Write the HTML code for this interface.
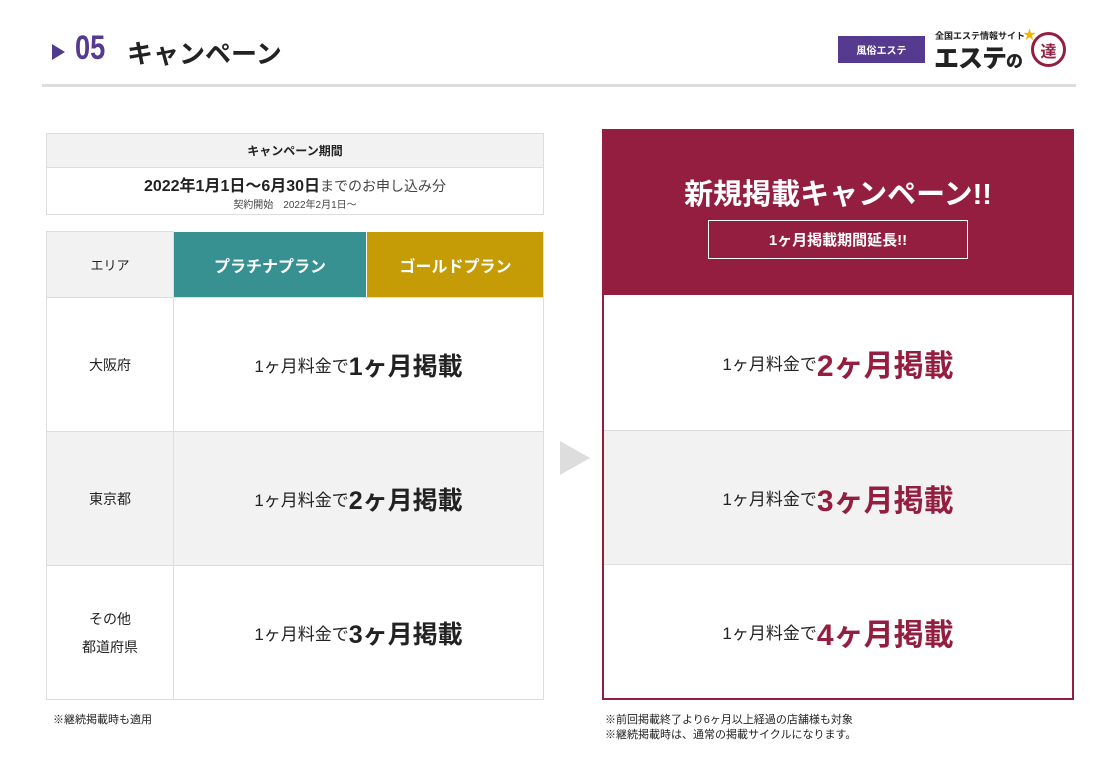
<!DOCTYPE html>
<html><head><meta charset="utf-8"><style>
*{margin:0;padding:0;box-sizing:border-box}
body{width:1117px;height:784px;background:#fff;font-family:"Liberation Sans","Noto Sans CJK JP",sans-serif;color:#222;position:relative;overflow:hidden}
.a{position:absolute}
.c{display:flex;align-items:center;justify-content:center;text-align:center}
.cell{position:absolute;border:1px solid #ddd}
.big{font-size:25px;font-weight:bold}
.big.red{font-size:30px}
.sm{font-size:17px}
.red{color:#931e40}
</style></head><body>
<div class="a" style="left:52px;top:44px;width:0;height:0;border-left:13px solid #4f3b8c;border-top:8px solid transparent;border-bottom:8px solid transparent"></div>
<div class="a" style="left:75px;top:29px;font-size:34px;font-weight:bold;color:#553a90;transform:scaleX(.8);transform-origin:left">05</div>
<div class="a" style="left:127px;top:34px;font-size:26px;font-weight:bold">キャンペーン</div>
<div class="a c" style="left:838px;top:36px;width:87px;height:27px;background:#553a90;color:#fff;font-size:10px;font-weight:bold">風俗エステ</div>
<div class="a" style="left:935px;top:29px;font-size:9px;font-weight:bold">全国エステ情報サイト</div>
<div class="a" style="left:1023px;top:24px;color:#f4b400;font-size:13px">★</div>
<div class="a" style="left:934px;top:39px;font-size:25px;font-weight:900;letter-spacing:-1px">エステ<span style="font-size:17px">の</span></div>
<div class="a c" style="left:1031px;top:32px;width:35px;height:35px;border:3px solid #931e40;border-radius:50%;color:#931e40;font-weight:bold;font-size:16px">達</div>
<div class="a" style="left:42px;top:84px;width:1034px;height:3px;background:#ddd"></div>

<div class="cell c" style="left:46px;top:133px;width:498px;height:35px;background:#f2f2f2;font-size:12px;font-weight:bold">キャンペーン期間</div>
<div class="cell" style="left:46px;top:167px;width:498px;height:48px;text-align:center;border-top:none">
<div style="margin-top:5px;font-size:16px"><b>2022年1月1日～6月30日</b><span style="font-size:14px;color:#444">までのお申し込み分</span></div>
<div style="font-size:10px;color:#444">契約開始　2022年2月1日～</div></div>

<div class="cell c" style="left:46px;top:231px;width:128px;height:67px;background:#f2f2f2;font-size:13px">エリア</div>
<div class="a c" style="left:174px;top:232px;width:192px;height:65px;background:#379191;color:#fff;font-size:16px;font-weight:bold">プラチナプラン</div>
<div class="a c" style="left:367px;top:232px;width:177px;height:65px;background:#c59c06;color:#fff;font-size:16px;font-weight:bold">ゴールドプラン</div>
<div class="a" style="left:543px;top:231px;width:1px;height:67px;background:#ddd"></div>

<div class="cell c" style="left:46px;top:297px;width:128px;height:135px;font-size:14px">大阪府</div>
<div class="cell c" style="left:173px;top:297px;width:371px;height:135px"><span class="sm">1ヶ月料金で</span><span class="big">1ヶ月掲載</span></div>
<div class="cell c" style="left:46px;top:431px;width:128px;height:135px;background:#f2f2f2;font-size:14px">東京都</div>
<div class="cell c" style="left:173px;top:431px;width:371px;height:135px;background:#f2f2f2"><span class="sm">1ヶ月料金で</span><span class="big">2ヶ月掲載</span></div>
<div class="cell c" style="left:46px;top:565px;width:128px;height:135px;font-size:14px;line-height:28px">その他<br>都道府県</div>
<div class="cell c" style="left:173px;top:565px;width:371px;height:135px"><span class="sm">1ヶ月料金で</span><span class="big">3ヶ月掲載</span></div>
<div class="a" style="left:53px;top:711px;font-size:11px">※継続掲載時も適用</div>

<div class="a" style="left:560px;top:441px;width:0;height:0;border-left:30px solid #ddd;border-top:17px solid transparent;border-bottom:17px solid transparent"></div>

<div class="a" style="left:602px;top:129px;width:472px;height:571px;border:2px solid #931e40"></div>
<div class="a" style="left:602px;top:129px;width:472px;height:166px;background:#931e40"></div>
<div class="a" style="left:602px;top:171px;width:472px;text-align:center;color:#fff;font-size:29px;font-weight:bold">新規掲載キャンペーン!!</div>
<div class="a c" style="left:708px;top:220px;width:260px;height:39px;border:1px solid #fff;color:#fff;font-size:15px;font-weight:bold">1ヶ月掲載期間延長!!</div>
<div class="a c" style="left:604px;top:295px;width:468px;height:135px"><span class="sm">1ヶ月料金で</span><span class="big red">2ヶ月掲載</span></div>
<div class="a c" style="left:604px;top:430px;width:468px;height:135px;background:#f2f2f2;border-top:1px solid #ddd;border-bottom:1px solid #ddd"><span class="sm">1ヶ月料金で</span><span class="big red">3ヶ月掲載</span></div>
<div class="a c" style="left:604px;top:565px;width:468px;height:133px"><span class="sm">1ヶ月料金で</span><span class="big red">4ヶ月掲載</span></div>
<div class="a" style="left:605px;top:713px;font-size:11px;line-height:15px">※前回掲載終了より6ヶ月以上経過の店舗様も対象<br>※継続掲載時は、通常の掲載サイクルになります。</div>
</body></html>
